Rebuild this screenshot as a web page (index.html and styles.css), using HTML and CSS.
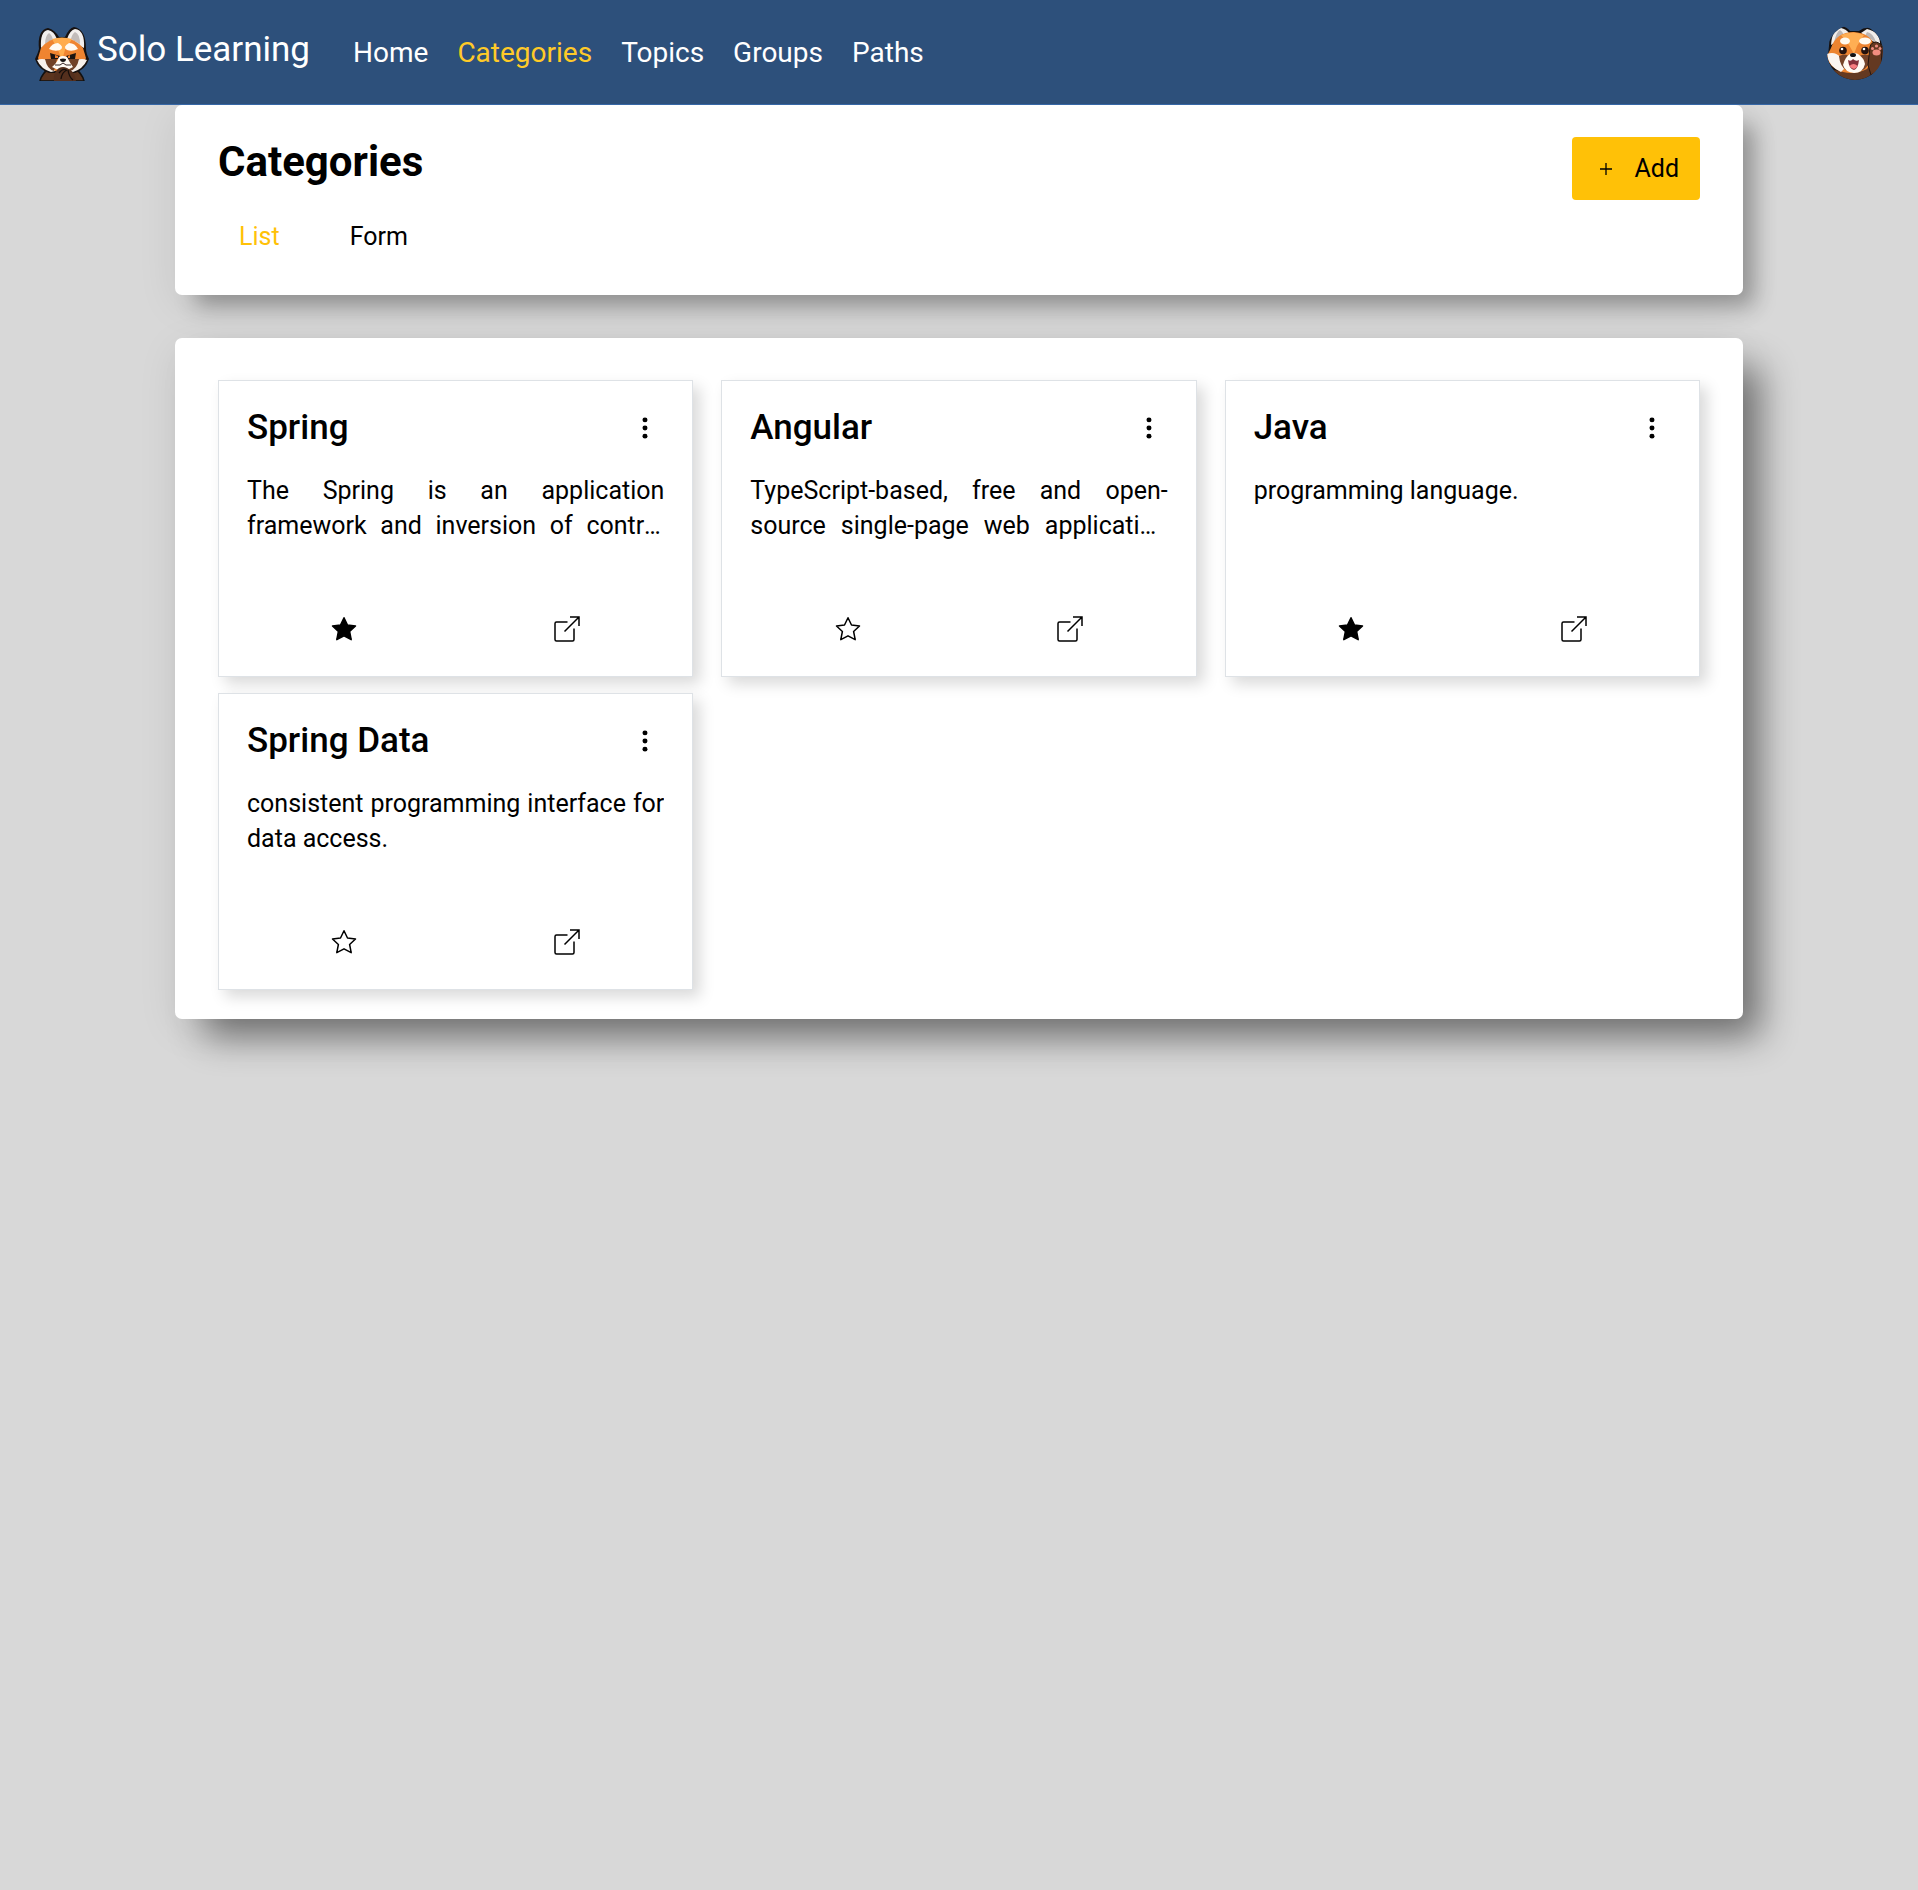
FILE: index.html
```html
<!DOCTYPE html>
<html lang="en">
<head>
<meta charset="utf-8">
<meta name="viewport" content="width=device-width, initial-scale=1">
<title>Solo Learning</title>
<link rel="stylesheet" href="styles.css">
</head>
<body>
<svg class="sprite" aria-hidden="true">
  <symbol id="dots" viewBox="0 0 24 24"><circle cx="12" cy="4.500" r="2.300"/><circle cx="12" cy="12" r="2.300"/><circle cx="12" cy="19.500" r="2.300"/></symbol>
  <symbol id="star" viewBox="0 0 26 26"><path d="M13 1.700l3.500 7.300 8 1-5.900 5.500 1.600 8.200L13 19.800l-7.200 3.900 1.600-8.200L1.500 10l8-1z" stroke="currentColor" stroke-width="1.500" stroke-linejoin="round"/></symbol>
  <symbol id="open" viewBox="0 0 26 26"><path d="M13.500 6H2.500Q1 6 1 7.500v16Q1 25 2.500 25h16q1.500 0 1.500-1.500v-11M16 1h9v9M25 1L10.500 15.500" fill="none" stroke="currentColor" stroke-width="1.500"/></symbol>
</svg>
<header class="topbar">
  <a class="brand" href="#">
    <svg class="brand-logo" viewBox="0 0 54 54" aria-hidden="true">
      <path d="M5 54q2-8 9-12h26q7 4 9 12z" fill="#5b341e" stroke="#111" stroke-width="1.500"/>
      <path d="M4 22Q2 3 13 1q7 2 11 9h6Q34 1 39 0q12 2 12 22 0 4 3 10-3 10-14 14H14Q3 42 0 32q3-6 4-10z" fill="#17110f"/>
      <path d="M6 21Q5 4 13 3q6 1 9 9zM49 21Q50 3 40 2q-5 1-8 10z" fill="#f2efed"/>
      <path d="M10 17q0-8 4-11 3 2 4 7zM45 17q0-10-5-12-3 2-4 7z" fill="#c2bcba"/>
      <path d="M6 21q8-10 21-10t21 10l3 10q-3 9-13 13H16Q6 41 3 31z" fill="#ef8430"/>
      <path d="M17 12q10-3 20 0l-7 11-3 10-4-10z" fill="#ffac4d"/>
      <path d="M2 33q5-2 10 0l8 11-4 1Q6 42 2 33zM52 33q-5-2-10 0l-8 11 4 1q10-3 14-12z" fill="#f7f0eb"/>
      <path d="M10 32q6 0 12 0l-3 12q-7-2-9-12zM44 32q-6 0-12 0l3 12q7-2 9-12z" fill="#704026"/>
      <path d="M14 22q3-6 9-6 7 4 2 7-5 2-11-1zM32 23q-5-3 2-7 6 0 9 6-6 3-11 1z" fill="#fffaf2"/>
      <path d="M15 26l10 3-2 3-7 0zM41 26l-10 3 2 3h7z" fill="#1b1411"/>
      <path d="M20 28l3 1v2h-3zM35 28l-2 1v2h2z" fill="#ef7b2b"/>
      <path d="M24 30q4-2 8 0 3 6 6 10-10 7-21 0 5-4 7-10z" fill="#fffaf4"/>
      <path d="M25 32q3-1 6 0 0 3-3 3t-3-3z" fill="#161313"/>
      <path d="M20 38q6 1 8-2 2 3 8 2" fill="none" stroke="#322" stroke-width="1"/>
      <path d="M19 54q-1-9 5-13 4-2 8 0 8 3 9 13z" fill="#542f1d"/>
      <path d="M24 46q4-5 7-3M26 52q1-7 6-9m1 0q1 7 5 10" fill="none" stroke="#150e0b" stroke-width="1.300"/>
    </svg>
    <span>Solo Learning</span>
  </a>
  <nav class="nav" aria-label="Main">
    <a href="#">Home</a>
    <a class="current" href="#" aria-current="page">Categories</a>
    <a href="#">Topics</a>
    <a href="#">Groups</a>
    <a href="#">Paths</a>
  </nav>
  <button class="avatar" type="button" aria-label="Account">
    <svg viewBox="0 0 56 56" aria-hidden="true">
      <clipPath id="round"><circle cx="28" cy="26" r="28"/></clipPath>
      <g clip-path="url(#round)">
      <path d="M2 20Q3 1 14 0q6 1 9 5h9q5-4 11-3 13 2 13 18l-6 20-8 16H10L0 39z" fill="#17110f"/>
      <path d="M4 19Q5 3 14 2q5 1 8 5zM53 20q1-14-13-17l-6 4z" fill="#f2eeeb"/>
      <path d="M7 17Q9 6 13 4q4 3 4 7zM49 16q-3-9-9-10l-2 4z" fill="#bcb6b4"/>
      <path d="M6 44q18 3 34-2l4-22q8-6 12 1v35H8z" fill="#643921"/>
      <path d="M4 22Q9 6 27 6q16 1 20 13-1 18-7 24-12 6-24 3Q1 41 0 30z" fill="#ed8430"/>
      <path d="M14 9q12-5 23 0l-7 11-3 8-5-9z" fill="#ffae53"/>
      <path d="M0 28q8-3 13 3l4 12-3 3Q1 40 0 28z" fill="#fbf5f0"/>
      <path d="M12 30q6-3 10 0l-3 14q-6-4-7-14zM32 30q6-3 12 0-1 11-10 15z" fill="#754329"/>
      <ellipse cx="18" cy="15" rx="5" ry="3.500" fill="#fff9ef"/>
      <ellipse cx="38" cy="15" rx="6" ry="3.500" fill="#fff9ef"/>
      <path d="M23 28q4-2 8 0 6 4 7 10-2 9-11 9-9-1-11-8 2-8 7-11z" fill="#fffaf4"/>
      <circle cx="16" cy="24.500" r="3.800" fill="#24120e"/><circle cx="38" cy="24.500" r="3.800" fill="#24120e"/>
      <circle cx="15" cy="23" r="1.300" fill="#fff"/><circle cx="37" cy="23" r="1.300" fill="#fff"/>
      <ellipse cx="26" cy="29" rx="3" ry="2" fill="#141213"/>
      <path d="M21 34q3 2 5-1 3 3 6 1-1 9-5 10-5-1-6-10z" fill="#84303a"/>
      <path d="M22.500 40q4-4 8 0-3 6-8 0z" fill="#f77c80"/>
      <path d="M43 21q1-5 6-5 6 1 6 8l-1 19-10 6-3-10z" fill="#643921" stroke="#24150f"/>
      <g fill="#f18d80"><circle cx="45.500" cy="22.500" r="1.500"/><circle cx="49.500" cy="20" r="1.600"/><circle cx="53" cy="22.500" r="1.500"/><ellipse cx="49.500" cy="26.500" rx="4" ry="3"/></g>
      </g>
    </svg>
  </button>
</header>
<main class="page">
  <section class="panel heading">
    <div>
      <h1>Categories</h1>
      <nav class="tabs" aria-label="View">
        <a class="current" href="#" aria-current="page">List</a>
        <a href="#">Form</a>
      </nav>
    </div>
    <button class="add" type="button">
      <svg viewBox="0 0 14 14" aria-hidden="true"><path d="M7 1v12M1 7h12" stroke="currentColor" stroke-width="1.300"/></svg>
      <span>Add</span>
    </button>
  </section>
  <section class="panel list">
    <article class="card">
      <div class="card-head"><h2>Spring</h2><button class="icon" type="button" aria-label="More"><svg><use href="#dots"/></svg></button></div>
      <p>The Spring is an application framework and inversion of control container for the Java platform.</p>
      <div class="actions"><button class="icon filled" type="button" aria-label="Remove favorite"><svg><use href="#star"/></svg></button><button class="icon" type="button" aria-label="Open"><svg><use href="#open"/></svg></button></div>
    </article>
    <article class="card">
      <div class="card-head"><h2>Angular</h2><button class="icon" type="button" aria-label="More"><svg><use href="#dots"/></svg></button></div>
      <p>TypeScript-based, free and open-source single-page web application framework led by the Angular Team.</p>
      <div class="actions"><button class="icon outline" type="button" aria-label="Add favorite"><svg><use href="#star"/></svg></button><button class="icon" type="button" aria-label="Open"><svg><use href="#open"/></svg></button></div>
    </article>
    <article class="card">
      <div class="card-head"><h2>Java</h2><button class="icon" type="button" aria-label="More"><svg><use href="#dots"/></svg></button></div>
      <p>programming language.</p>
      <div class="actions"><button class="icon filled" type="button" aria-label="Remove favorite"><svg><use href="#star"/></svg></button><button class="icon" type="button" aria-label="Open"><svg><use href="#open"/></svg></button></div>
    </article>
    <article class="card">
      <div class="card-head"><h2>Spring Data</h2><button class="icon" type="button" aria-label="More"><svg><use href="#dots"/></svg></button></div>
      <p>consistent programming interface for data access.</p>
      <div class="actions"><button class="icon outline" type="button" aria-label="Add favorite"><svg><use href="#star"/></svg></button><button class="icon" type="button" aria-label="Open"><svg><use href="#open"/></svg></button></div>
    </article>
  </section>
</main>
</body>
</html>
```
FILE: styles.css
```css
* { box-sizing: border-box; }

body {
  margin: 0;
  min-height: 100vh;
  background: #d8d8d8;
  color: #000;
  font: 25px/35px Roboto, "Liberation Sans", sans-serif;
}

h1, h2, p { margin: 0; }
a { color: inherit; text-decoration: none; }
button { padding: 0; border: 0; background: none; color: inherit; font: inherit; cursor: pointer; }
svg { display: block; }
.sprite { position: absolute; width: 0; height: 0; }

.topbar {
  position: relative;
  z-index: 1;
  display: flex;
  align-items: center;
  height: 105px;
  padding: 4px 35px 0;
  border-bottom: 1px solid #3667a6;
  background: #2d507b;
  color: #fff;
}
.brand { display: flex; gap: 8px; font-size: 35px; line-height: 46px; }
.brand-logo { width: 54px; height: 54px; }
.nav { display: flex; gap: 29px; margin: 0 0 4px 43px; font-size: 28px; }
.nav .current { color: #ffca28; }
.avatar { width: 56px; height: 56px; margin-left: auto; }

.page { max-width: 1568px; margin: 0 auto; }
.panel { border-radius: 7px; background: #fff; }
.heading {
  display: flex;
  justify-content: space-between;
  align-items: flex-start;
  min-height: 190px;
  padding: 32px 43px;
  box-shadow: 16px 16px 22px -5px rgba(0, 0, 0, .3), 0 10px 40px rgba(0, 0, 0, .08);
}
h1 { font-size: 42px; line-height: 50px; font-weight: 700; }
.tabs { display: flex; gap: 70px; padding: 32px 21px 0; }
.tabs .current { color: #ffc107; }
.add {
  display: flex;
  align-items: center;
  gap: 21px;
  height: 63px;
  padding: 0 21px 0 27px;
  border-radius: 4px;
  background: #ffc107;
}
.add svg { width: 14px; height: 14px; }

.list {
  display: grid;
  grid-template-columns: repeat(3, minmax(0, 1fr));
  gap: 16px 28px;
  margin-top: 43px;
  padding: 42px 43px 29px;
  box-shadow: 24px 24px 36px -6px rgba(0, 0, 0, .46), 0 10px 40px rgba(0, 0, 0, .08);
}
.card {
  display: flex;
  flex-direction: column;
  height: 297px;
  padding: 24px 28px;
  border: 1px solid #dee2e6;
  background: #fff;
  box-shadow: 7px 7px 14px rgba(0, 0, 0, .15);
}
.card-head { display: flex; justify-content: space-between; align-items: center; padding-right: 6px; }
h2 { font-size: 35px; line-height: 46px; font-weight: 500; }
.card p {
  display: -webkit-box;
  -webkit-box-orient: vertical;
  -webkit-line-clamp: 2;
  overflow: hidden;
  margin-top: 22px;
  text-align: justify;
}
.actions { display: flex; justify-content: space-around; margin: auto -14px 10px; }
.icon svg { width: 26px; height: 26px; fill: currentColor; }
.icon.outline svg { fill: none; }
```
